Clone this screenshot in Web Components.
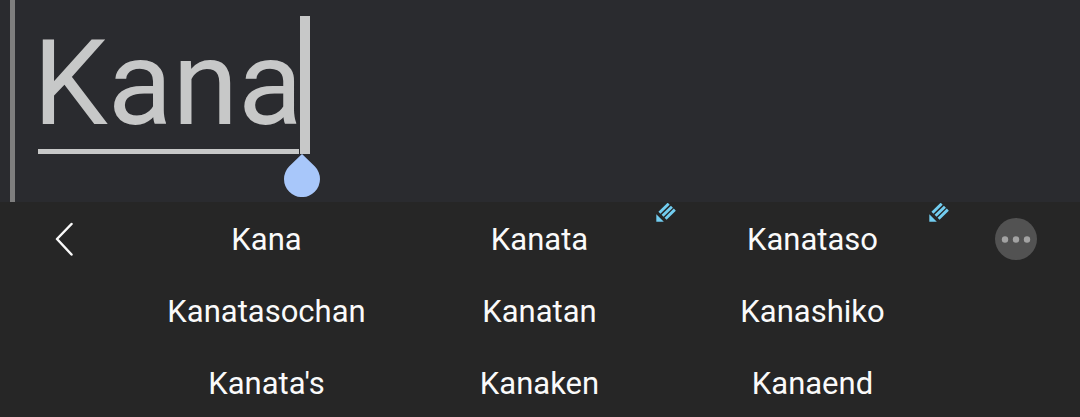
<!DOCTYPE html>
<html lang="en">
<head>
<meta charset="utf-8">
<meta name="viewport" content="width=device-width, initial-scale=1">
<title>Text entry with suggestions</title>
<style>
html, body { margin: 0; background: #262626; }
body { font-family: Roboto, "Liberation Sans", sans-serif; overflow: hidden; }
</style>
</head>
<body>
<typing-screen></typing-screen>
<script>
class BaseElement extends HTMLElement {
  constructor() {
    super();
    this.attachShadow({ mode: "open" }).innerHTML = this.markup();
  }
}

customElements.define("text-editor", class extends BaseElement {
  markup() {
    return `<style>
      :host { display: block; background: #2a2b2f; padding-left: 10px; }
      .quote { display: flex; align-items: flex-start; box-sizing: border-box; height: 202px; border-left: 5px solid #7e7e7e; padding: 16px 0 0 23px; }
      input { box-sizing: border-box; height: 138px; width: 261px; margin: 0; padding: 2px 0 0; border: 0; border-bottom: 5px solid #c7c8c8; border-radius: 0; outline: 0; background: none; color: #c7c8c8; font-family: inherit; font-size: 119px; line-height: 131px; text-indent: -5px; caret-color: transparent; }
      .caret { position: relative; width: 10px; height: 138px; margin-left: 1px; background: #c7c8c8; }
      svg { position: absolute; top: 100%; left: -16px; display: block; }
    </style>
    <div class="quote">
      <input type="text" value="Kana" aria-label="Message" spellcheck="false">
      <div class="caret"><svg width="36" height="43" viewBox="0 0 36 43" aria-hidden="true"><path d="M18 0 L30.700 12.300 A18 18 0 1 1 5.300 12.300 Z" fill="#a8c7fa"/></svg></div>
    </div>`;
  }
});

customElements.define("pencil-mark", class extends BaseElement {
  markup() {
    return `<style>:host { display: block; } svg { display: block; }</style>
    <svg width="20" height="20" viewBox="0 0 20.500 20.500" aria-hidden="true">
      <path d="M0.300 11.500 L8 19.200 H0.300 Z" fill="#72cdf0"/>
      <path d="M3.500 10 L13 0.700 M6.700 13.100 L16.300 3.800 M9.800 16.100 L19.300 6.800" stroke="#72cdf0" stroke-width="2.900" fill="none"/>
    </svg>`;
  }
});

customElements.define("word-suggestion", class extends BaseElement {
  markup() {
    return `<style>
      :host { display: block; position: relative; }
      button { display: block; box-sizing: border-box; width: 100%; height: 72px; margin: 0; padding: 2px 0 0; border: 0; background: none; color: #fafafa; font-family: inherit; font-size: 31px; line-height: 70px; text-align: center; }
      ::slotted(pencil-mark) { position: absolute; top: 0; right: 0; }
    </style>
    <button type="button"><slot></slot></button><slot name="mark"></slot>`;
  }
});

customElements.define("suggestion-panel", class extends BaseElement {
  markup() {
    return `<style>
      :host { display: grid; grid-template-columns: 130px 1fr 131px; background: #262626; padding-top: 1px; }
      .words { display: grid; grid-template-columns: repeat(3, 1fr); }
      .tool { display: flex; align-items: center; justify-content: center; width: 100%; height: 72px; margin: 0; padding: 0; border: 0; background: none; }
      svg { display: block; }
    </style>
    <button class="tool" type="button" aria-label="Back">
      <svg width="22" height="36" viewBox="0 0 22 36"><path d="M17.500 3 L3 18 L17.500 33.500" fill="none" stroke="#fafafa" stroke-width="2.500" stroke-linecap="round" stroke-linejoin="round"/></svg>
    </button>
    <div class="words"><slot></slot></div>
    <button class="tool" type="button" aria-label="More">
      <svg width="44" height="42" viewBox="0 0 44 42"><circle cx="23" cy="21" r="21" fill="#525252"/><g fill="#a3a3a3"><circle cx="12" cy="21.500" r="3.200"/><circle cx="23" cy="21.500" r="3.200"/><circle cx="34" cy="21.500" r="3.200"/></g></svg>
    </button>`;
  }
});

customElements.define("typing-screen", class extends BaseElement {
  markup() {
    return `<style>:host { display: block; }</style>
    <text-editor></text-editor>
    <suggestion-panel>
      <word-suggestion>Kana</word-suggestion>
      <word-suggestion>Kanata<pencil-mark slot="mark"></pencil-mark></word-suggestion>
      <word-suggestion>Kanataso<pencil-mark slot="mark"></pencil-mark></word-suggestion>
      <word-suggestion>Kanatasochan</word-suggestion>
      <word-suggestion>Kanatan</word-suggestion>
      <word-suggestion>Kanashiko</word-suggestion>
      <word-suggestion>Kanata's</word-suggestion>
      <word-suggestion>Kanaken</word-suggestion>
      <word-suggestion>Kanaend</word-suggestion>
    </suggestion-panel>`;
  }
});
</script>
</body>
</html>
